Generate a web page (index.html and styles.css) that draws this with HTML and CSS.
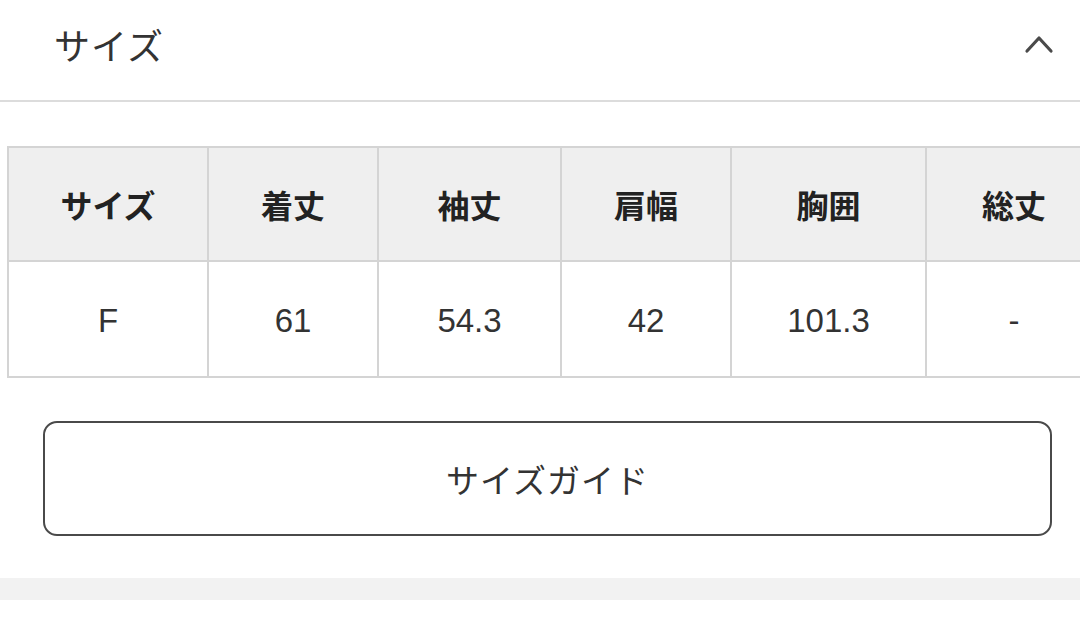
FILE: index.html
```html
<!DOCTYPE html>
<html lang="ja">
<head>
<meta charset="utf-8">
<link rel="stylesheet" href="styles.css">
</head>
<body>
<section class="panel">
  <header class="panel-head">
    <h2 class="panel-title">サイズ</h2>
    <svg class="chevron" width="30" height="22" viewBox="0 0 30 22">
      <polyline points="3,18 15,5 27,18" fill="none" stroke="#4a4a4a" stroke-width="3.2" stroke-linecap="round" stroke-linejoin="round"/>
    </svg>
  </header>
  <div class="table-wrap">
    <table class="size-table">
      <colgroup>
        <col class="c1"><col class="c2"><col class="c3"><col class="c4"><col class="c5"><col class="c6">
      </colgroup>
      <thead>
        <tr><th>サイズ</th><th>着丈</th><th>袖丈</th><th>肩幅</th><th>胸囲</th><th>総丈</th></tr>
      </thead>
      <tbody>
        <tr><td>F</td><td>61</td><td>54.3</td><td>42</td><td>101.3</td><td>-</td></tr>
      </tbody>
    </table>
  </div>
  <div class="btn-row">
    <button class="guide-btn" type="button">サイズガイド</button>
  </div>
</section>
<div class="strip"></div>
</body>
</html>
```
FILE: styles.css
```css
html, body {
  margin: 0;
  padding: 0;
  background: #ffffff;
  font-family: "Liberation Sans", "Noto Sans CJK JP", sans-serif;
  color: #333333;
}

.panel {
  display: flex;
  flex-direction: column;
}

.panel-head {
  border-bottom: 2px solid #dcdcdc;
  display: flex;
  align-items: center;
  justify-content: space-between;
  padding: 0 26px 12px 54px;
  box-sizing: border-box;
  height: 102px;
}

.panel-title {
  margin: 0;
  font-family: "Noto Sans CJK JP", sans-serif;
  font-weight: 400;
  font-size: 36px;
  letter-spacing: 1px;
  color: #333333;
  line-height: 1;
}

.chevron {
  display: block;
}

.table-wrap {
  overflow: hidden;
  padding: 44px 0 0 7px;
}

.size-table {
  border-collapse: collapse;
  table-layout: fixed;
  width: 1094px;
}

.c1 { width: 200px; }
.c2 { width: 170px; }
.c3 { width: 183px; }
.c4 { width: 170px; }
.c5 { width: 195px; }
.c6 { width: 176px; }

.size-table th,
.size-table td {
  border: 2px solid #d4d4d4;
  text-align: center;
  padding: 0;
}

.size-table th {
  height: 112px;
  background: #efefef;
  font-family: "Noto Sans CJK JP", sans-serif;
  font-weight: 700;
  font-size: 32px;
  color: #222222;
}

.size-table td {
  height: 110px;
  padding-top: 4px;
  font-size: 33px;
  color: #333333;
}

.btn-row {
  padding: 43px 28px 42px 43px;
}

.guide-btn {
  display: block;
  width: 100%;
  height: 115px;
  border: 2px solid #4a4a4a;
  border-radius: 14px;
  background: #ffffff;
  font-family: "Noto Sans CJK JP", sans-serif;
  font-size: 33px;
  letter-spacing: 1px;
  color: #333333;
  padding: 0;
}

.strip {
  height: 22px;
  background: #f2f2f2;
}
```
